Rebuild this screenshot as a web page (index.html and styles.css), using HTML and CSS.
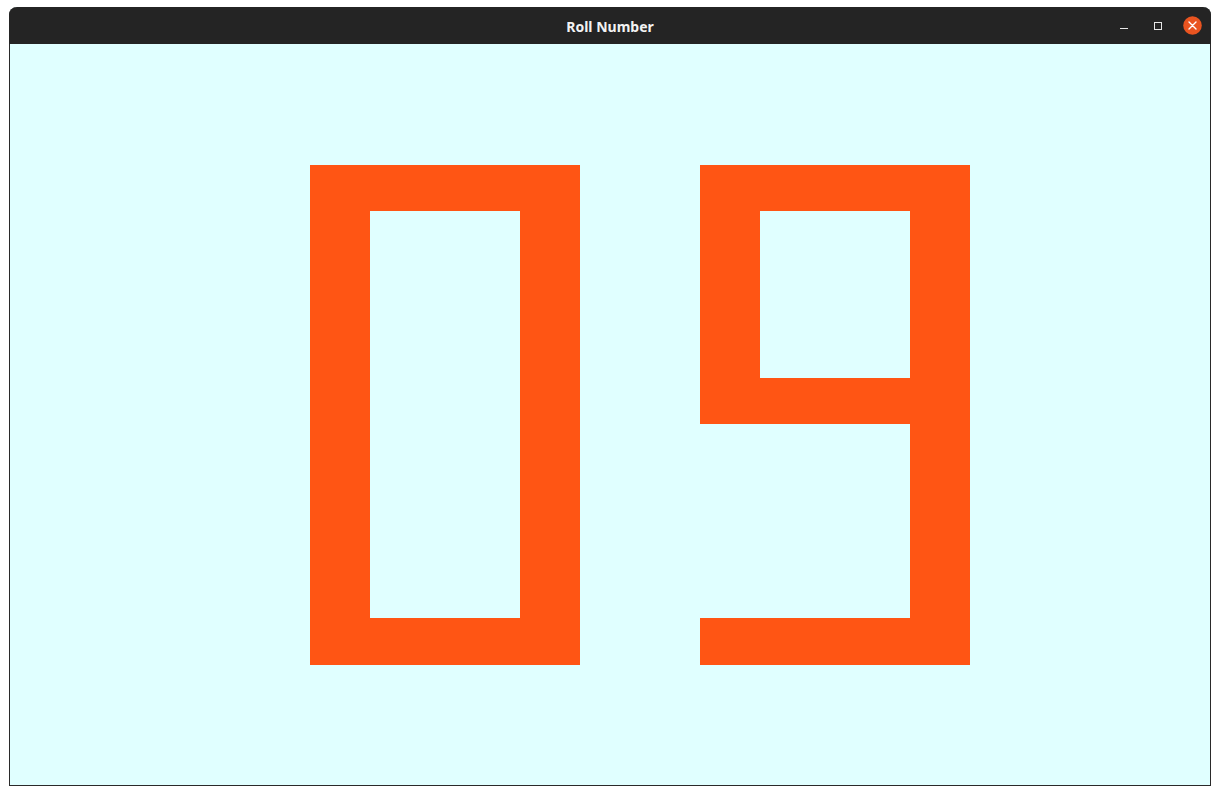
FILE: index.html
```html
<!DOCTYPE html>
<html>
<head>
<meta charset="utf-8">
<title>Roll Number</title>
<link rel="stylesheet" href="styles.css">
</head>
<body>
<div class="window">
  <div class="titlebar">
    <div class="title">Roll Number</div>
    <div class="controls">
      <span class="btn btn-min"><svg width="10" height="10" viewBox="0 0 10 10"><rect x="1" y="7" width="8" height="1" fill="#e6e6e6"/></svg></span>
      <span class="btn btn-max"><svg width="10" height="10" viewBox="0 0 10 10"><rect x="1.5" y="1.5" width="7" height="7" fill="none" stroke="#e6e6e6" stroke-width="1"/></svg></span>
      <span class="btn btn-close"><svg width="19" height="19" viewBox="0 0 19 19"><circle cx="9.5" cy="9.5" r="9.3" fill="#e95420"/><path d="M6 6L13 13M13 6L6 13" stroke="#ffffff" stroke-width="1.4" stroke-linecap="round"/></svg></span>
    </div>
  </div>
  <div class="content">
    <svg class="digit" width="270" height="500" viewBox="0 0 270 500"><path fill-rule="evenodd" d="M0 0H270V500H0Z M60 46V453H210V46Z"/></svg>
    <svg class="digit" width="270" height="500" viewBox="0 0 270 500"><path fill-rule="evenodd" d="M0 0H270V500H0V453H210V259H0Z M60 46V213H210V46Z"/></svg>
  </div>
</div>
</body>
</html>
```

FILE: styles.css
```css
html, body {
  margin: 0;
  padding: 0;
  background: #ffffff;
}
.window {
  margin: 7px 0 0 9px;
  width: 1202px;
  box-sizing: border-box;
  border: 1px solid #2a2a2a;
  border-top: none;
  border-radius: 8px 8px 0 0;
  background: #e0ffff;
}
.titlebar {
  height: 37px;
  margin: 0 -1px;
  background: #242424;
  border-radius: 8px 8px 0 0;
  display: flex;
  align-items: center;
  justify-content: center;
  position: relative;
}
.title {
  font-family: "Noto Sans", "DejaVu Sans", sans-serif;
  font-weight: bold;
  font-size: 14px;
  color: #f2f2f2;
  padding-top: 2px;
}
.controls {
  position: absolute;
  right: 9px;
  top: 0;
  height: 37px;
  display: flex;
  align-items: center;
}
.btn {
  display: flex;
  align-items: center;
  justify-content: center;
}
.btn-min { width: 10px; margin-right: 24px; }
.btn-max { width: 10px; margin-right: 20px; }
.btn-close { width: 19px; }
.content {
  height: 741px;
  box-sizing: border-box;
  padding: 121px 0 0 300px;
  display: flex;
  align-items: flex-start;
  gap: 120px;
}
.digit {
  display: block;
  fill: #ff5514;
}
```
